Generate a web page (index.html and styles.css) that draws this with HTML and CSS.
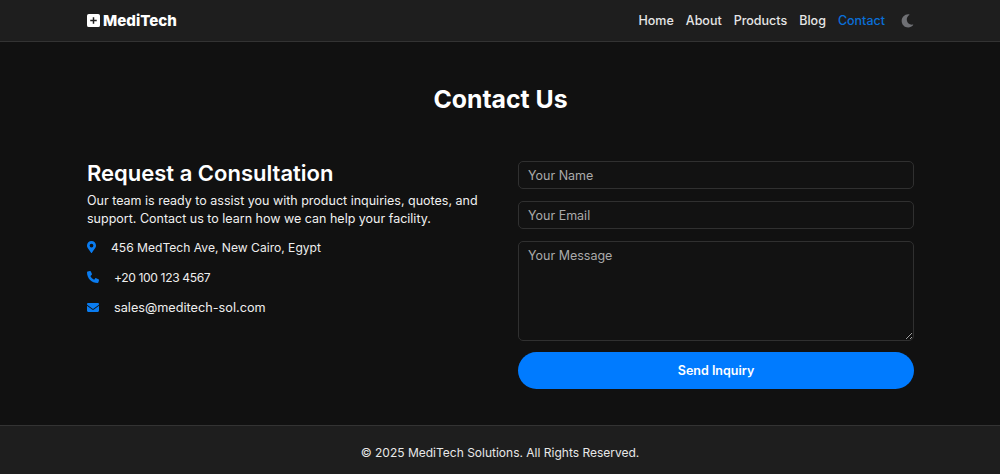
FILE: index.html
```html
<!DOCTYPE html>
<html lang="en">
<head>
<meta charset="utf-8">
<title>Contact Us - MediTech</title>
<link rel="stylesheet" href="styles.css">
</head>
<body>
<header class="site-header">
  <div class="container header-row">
    <a class="logo" href="#">
      <svg class="logo-icon" viewBox="0 0 14 14" width="13" height="13" aria-hidden="true"><path fill="#fff" fill-rule="evenodd" d="M2 0h10a2 2 0 0 1 2 2v10a2 2 0 0 1-2 2H2a2 2 0 0 1-2-2V2a2 2 0 0 1 2-2zM6.200 3.500v2.700H3.500v1.600h2.700v2.700h1.600V7.800h2.700V6.200H7.800V3.500z"/></svg>
      <span>MediTech</span>
    </a>
    <nav class="nav">
      <a href="#">Home</a>
      <a href="#">About</a>
      <a href="#">Products</a>
      <a href="#">Blog</a>
      <a href="#" class="active">Contact</a>
      <svg class="moon" viewBox="0 0 512 512" width="13" height="14" aria-hidden="true"><path fill="#6f7074" d="M283 512c79 0 151-36 199-95 7-9-1-22-12-20-126 24-242-73-242-200 0-73 39-140 103-176 10-6 7-21-4-23-15-3-30-4-44-4C141 0 26 115 26 256s115 256 257 256z"/></svg>
    </nav>
  </div>
</header>
<main class="contact container">
  <h1 class="page-title">Contact Us</h1>
  <div class="contact-grid">
    <section class="info">
      <h2>Request a Consultation</h2>
      <p class="lead">Our team is ready to assist you with product inquiries, quotes, and support. Contact us to learn how we can help your facility.</p>
      <ul class="details">
        <li class="address">
          <svg class="ic" viewBox="0 0 384 512" width="9" height="12" aria-hidden="true"><path fill="#0a7cf0" d="M172 502C27 291 0 265 0 192 0 86 86 0 192 0s192 86 192 192c0 73-27 99-172 310-9 14-31 14-40 0zm20-230a80 80 0 1 0 0-160 80 80 0 0 0 0 160z"/></svg>
          <span>456 MedTech Ave, New Cairo, Egypt</span>
        </li>
        <li class="phone">
          <svg class="ic" viewBox="0 0 512 512" width="12" height="12" aria-hidden="true"><path fill="#0a7cf0" d="M164 24c-8-19-28-29-48-24L28 24C11 29 0 44 0 62c0 247 200 450 450 450 18 0 33-12 38-29l24-88c5-20-5-40-24-48l-96-40c-16-7-35-2-46 12l-40 49c-70-33-127-90-160-160l49-40c14-11 19-30 12-46L164 24z"/></svg>
          <span>+20 100 123 4567</span>
        </li>
        <li class="email">
          <svg class="ic" viewBox="0 0 512 384" width="12" height="9" aria-hidden="true"><path fill="#0a7cf0" d="M48 0C21 0 0 21 0 48c0 15 7 29 19 38l218 164c11 8 27 8 38 0L493 86c12-9 19-23 19-38 0-27-21-48-48-48H48zM0 112v208c0 35 29 64 64 64h384c35 0 64-29 64-64V112L294 276c-23 17-53 17-76 0L0 112z"/></svg>
          <span>sales@meditech-sol.com</span>
        </li>
      </ul>
    </section>
    <form class="form">
      <input class="field" type="text" placeholder="Your Name">
      <input class="field" type="email" placeholder="Your Email">
      <textarea class="field area" placeholder="Your Message"></textarea>
      <button class="send" type="button">Send Inquiry</button>
    </form>
  </div>
</main>
<footer class="site-footer">
  <p>© 2025 MediTech Solutions. All Rights Reserved.</p>
</footer>
</body>
</html>
```

FILE: styles.css
```css
* { box-sizing: border-box; }
html, body { margin: 0; padding: 0; }
body {
  background: #111;
  color: #f2f2f2;
  font-family: Inter, "Liberation Sans", sans-serif;
  font-size: 12.500px;
  height: 474px;
  overflow: hidden;
  display: flex;
  flex-direction: column;
}
a { color: inherit; text-decoration: none; }
.container { width: 827px; margin: 0 0 0 87px; }
.site-header {
  background: #1e1e1e;
  height: 42px;
  flex: none;
  border-bottom: 1px solid #333;
}
.header-row {
  height: 41px;
  display: flex;
  align-items: center;
  justify-content: space-between;
}
.logo {
  display: flex;
  align-items: center;
  gap: 3px;
  color: #fff;
  font-size: 15.100px;
  font-weight: 800;
}
.logo-icon { display: block; }
.nav {
  display: flex;
  align-items: center;
  gap: 12px;
  font-size: 12.500px;
  font-weight: 500;
  color: #e6e6e6;
}
.nav .active { color: #0a6fd8; }
.moon { margin-left: 4px; display: block; }
.contact { flex: 1; }
.page-title {
  margin: 0;
  padding-top: 42px;
  text-align: center;
  font-size: 24.800px;
  line-height: 30px;
  font-weight: 700;
  color: #fff;
}
.contact-grid {
  display: grid;
  grid-template-columns: 391px 396px;
  gap: 40px;
  margin-top: 47px;
}
.info h2 {
  margin: 0;
  font-size: 22px;
  line-height: 24px;
  font-weight: 600;
  color: #fff;
}
.lead {
  margin: 7px 0 0;
  font-size: 12.500px;
  line-height: 18px;
  color: #f0f0f0;
}
.details { list-style: none; margin: 4px 0 0; padding: 0; }
.details li {
  display: flex;
  align-items: center;
  height: 30px;
  color: #eee;
}
.address { font-size: 12.100px; }
.phone { font-size: 12.100px; letter-spacing: -0.370px; }
.email { font-size: 12.700px; }
.ic { display: block; margin-right: 15px; }
.form { display: flex; flex-direction: column; gap: 12px; }
.field {
  display: block;
  width: 100%;
  height: 28px;
  background: #121212;
  border: 1px solid #303030;
  border-radius: 5px;
  padding: 0 9px;
  color: #eee;
  font: 400 12.500px Inter, "Liberation Sans", sans-serif;
}
.field::placeholder { color: #aaa; opacity: 1; }
.area { height: 100px; padding: 6px 9px; }
.send {
  height: 37px;
  margin-top: -1px;
  border: 0;
  border-radius: 19px;
  background: #007bff;
  color: #fff;
  font: 600 12.500px Inter, "Liberation Sans", sans-serif;
}
.site-footer {
  flex: none;
  height: 49px;
  padding-top: 4px;
  background: #1e1e1e;
  border-top: 1px solid #333;
  display: flex;
  align-items: center;
  justify-content: center;
}
.site-footer p { margin: 0; font-size: 12px; color: #e8e8e8; }
```
